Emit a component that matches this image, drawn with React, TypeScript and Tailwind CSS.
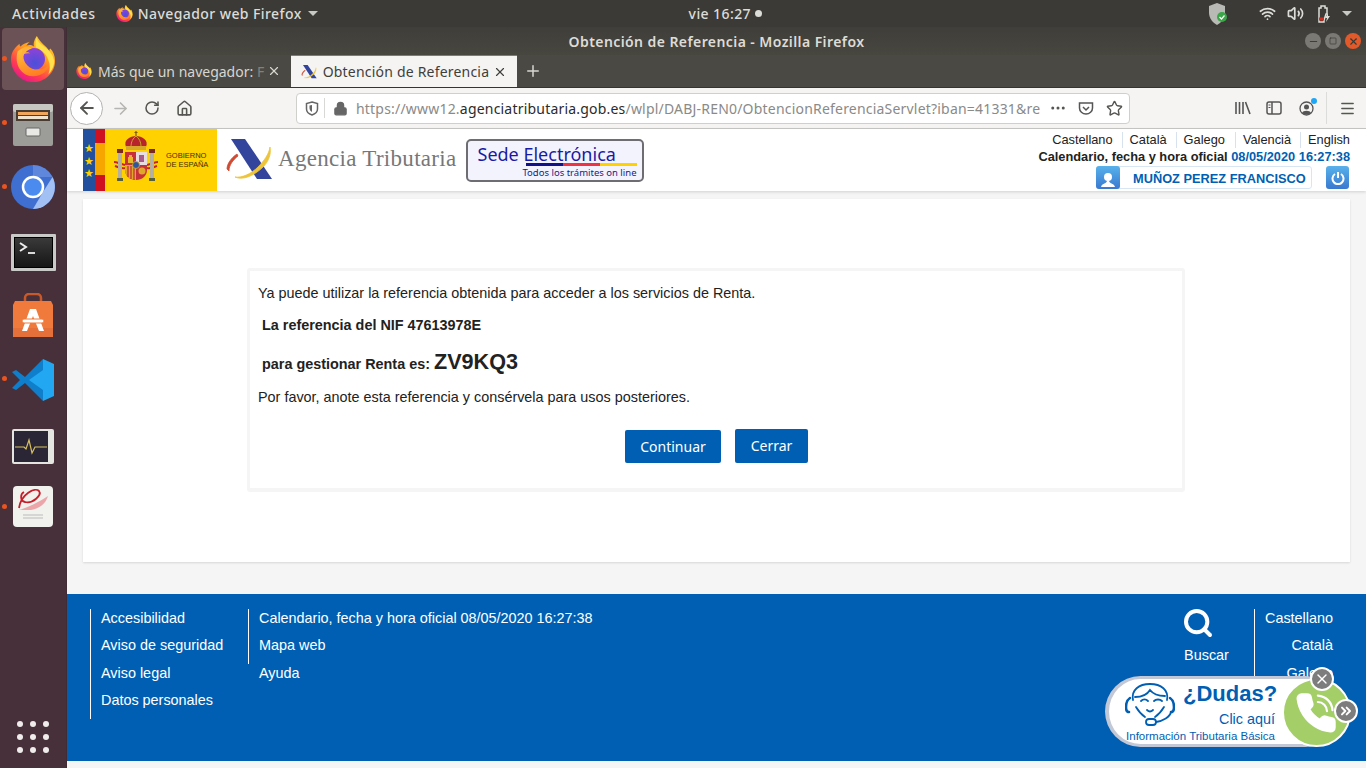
import React from 'react';
import { ArrowLeft, ArrowRight, RotateCw, Home, Lock, Star, Menu, X, Plus, Minus, Square, Wifi, Volume2, MoreHorizontal, ChevronsRight, Search } from 'lucide-react';

const ui = "font-['Noto_Sans',sans-serif]";
const web = "font-['Liberation_Sans',Arial,sans-serif]";

const Firefox = ({ size, id }: { size: number; id: string }) => (
  <svg width={size} height={size} viewBox="0 0 48 48">
    <defs>
      <linearGradient id={`${id}a`} x1="0.85" y1="0.05" x2="0.3" y2="1">
        <stop offset="0" stopColor="#ffd22e" />
        <stop offset="0.4" stopColor="#ff9a1f" />
        <stop offset="0.75" stopColor="#ff3d50" />
        <stop offset="1" stopColor="#e8168a" />
      </linearGradient>
      <linearGradient id={`${id}c`} x1="0.2" y1="0" x2="0.6" y2="1">
        <stop offset="0" stopColor="#ffc23a" />
        <stop offset="1" stopColor="#ff7a22" />
      </linearGradient>
      <radialGradient id={`${id}b`} cx="0.55" cy="0.7" r="0.8">
        <stop offset="0" stopColor="#4a50d8" />
        <stop offset="1" stopColor="#9a3fd8" />
      </radialGradient>
    </defs>
    <path d="M1 24c0 13 10 24 23 24s23-10 23-22c0-6-2-10-5-13-1 1-1 2-1 3C38 10 32 8 28 0c-2 3-4 7-3 11-3-2-5-2-8-1 1-1 2-3 4-4-5 1-8 3-10 5-1-1-1-2-1-3-5 4-9 9-9 16z" fill={`url(#${id}a)`} />
    <circle cx="25" cy="24" r="11.500" fill={`url(#${id}b)`} />
    <path d="M8 16c4-4 10-5 15-3-4 1-8 4-9 8 0 8 7 14 15 14 6 0 11-3 13-8-1 9-9 15-18 15C12 42 4 30 8 16z" fill={`url(#${id}c)`} />
    <path d="M14 12c3-1 5-1 7 0-2 1-4 3-5 5 2 0 4 0 5 1-3 0-6 0-9 2 0-3 1-6 2-8z" fill="#ffb03a" />
    <path d="M28 1c0 5 5 8 9 11 5 4 9 9 9 15 0 5-3 10-6 13 2-5 2-10 0-15-2-6-7-11-13-13-1-4 0-8 1-11z" fill="#ffe14d" />
  </svg>
);

const AgencyMark = ({ h }: { h: number }) => (
  <svg height={h} viewBox="0 0 50 42">
    <path d="M9 0h14l27 40H35z" fill="#33449c" />
    <path d="M48 8c2 10-4 19-13 25-7 5-15 8-22 5 7 1 16-3 23-10 6-6 11-13 12-20z" fill="#eec43a" stroke="#eec43a" strokeWidth="0.800" />
    <path d="M15 15C9 19 5 25 5 30l2 2c0-6 4-11 9-15z" fill="#cf4a33" stroke="#cf4a33" strokeWidth="0.800" />
  </svg>
);

const TopBar = () => (
  <div className={`h-[27px] shrink-0 bg-[#3b3a36] flex items-center text-[#dcdcd8] text-[14px] font-medium tracking-[0.42px] ${ui}`}>
    <span className="ml-3 tracking-[0.65px]">Actividades</span>
    <span className="ml-5"><Firefox size={17} id="t" /></span>
    <span className="ml-[5px]">Navegador web Firefox</span>
    <span className="ml-1.5 border-x-[5px] border-t-[5px] border-x-transparent border-t-[#c8c8c4]" />
    <div className="flex-1 flex justify-center items-center gap-1 pr-[74px]">
      <span>vie 16:27</span>
      <span className="w-[7px] h-[7px] rounded-full bg-[#dcdcd8]" />
    </div>
    <svg width="24" height="24" viewBox="0 0 24 24" className="mr-[28px]">
      <path d="M10 1l8 3v7c0 5-4 10-8 12-4-2-8-7-8-12V4z" fill="#b9b9b5" />
      <circle cx="15" cy="15" r="5" fill="#3aa648" />
      <path d="M12.500 15l2 2 3-3.500" stroke="#fff" strokeWidth="1.200" fill="none" />
    </svg>
    <Wifi size={17} strokeWidth={2.400} className="mr-[11px]" color="#dcdcd8" />
    <Volume2 size={17} strokeWidth={2.400} className="mr-[12px]" color="#dcdcd8" />
    <svg width="16" height="18" viewBox="0 0 16 18" className="mr-[10px]">
      <path d="M3 3h2V1h4v2h2v6H10L8 15v2H3z" fill="none" stroke="#dcdcd8" strokeWidth="1.500" />
      <rect x="3" y="12.500" width="5" height="3" fill="#d62a1e" />
      <path d="M12 8l-3 5h2l-1 4 4-6h-2z" fill="#dcdcd8" />
    </svg>
    <span className="mr-[14px] border-x-[5px] border-t-[5px] border-x-transparent border-t-[#c8c8c4]" />
  </div>
);

const DockItem = ({ dot, children, active }: { dot?: boolean; children: React.ReactNode; active?: boolean }) => (
  <div className="h-[64px] relative flex items-center justify-center">
    {dot && <span className="absolute left-[2px] top-[29px] w-[5px] h-[5px] rounded-full bg-[#e95420]" />}
    <div className={`w-[62px] h-[62px] rounded-[4px] flex items-center justify-center ${active ? 'bg-[#6b5257]' : ''}`}>{children}</div>
  </div>
);

const Dock = () => (
  <aside className="w-[67px] shrink-0 bg-[#47303a] flex flex-col border-r border-[#3f2c34]">
    <DockItem dot active><Firefox size={46} id="d" /></DockItem>
    <DockItem dot>
      <svg width="44" height="46" viewBox="0 0 44 46" className="mt-[3px]">
        <rect x="2" y="2" width="40" height="42" rx="2" fill="#9c9c98" />
        <rect x="2" y="2" width="40" height="8" rx="2" fill="#c6c6c2" />
        <rect x="5" y="8" width="34" height="11" fill="#4a3c33" />
        <rect x="7" y="10" width="30" height="3" fill="#f0a55a" />
        <rect x="7" y="14" width="30" height="3" fill="#efe3cf" />
        <rect x="15" y="26" width="14" height="8" rx="1" fill="#e8e8e4" stroke="#666" />
      </svg>
    </DockItem>
    <DockItem dot>
      <svg width="46" height="46" viewBox="0 0 46 46">
        <circle cx="23" cy="23" r="22" fill="#3f6fd0" />
        <path d="M23 1a22 22 0 0 1 19.500 12H23z" fill="#5f87dc" />
        <path d="M42.500 13A22 22 0 0 1 23 45l10-17z" fill="#a3c0f5" />
        <circle cx="23" cy="23" r="10" fill="#4b8bf0" stroke="#fff" strokeWidth="2.500" />
      </svg>
    </DockItem>
    <DockItem>
      <div className="w-[45px] h-[37px] mt-[3px] bg-[#c9c9c7] p-[3px] rounded-[1px]">
        <div className="w-full h-full bg-gradient-to-b from-[#3a3a3a] to-[#161616] border border-black flex items-start">
          <svg width="22" height="16" viewBox="0 0 22 16" className="mt-[3px] ml-[3px]">
            <path d="M2 2l6 4-6 4" stroke="#eee" strokeWidth="2" fill="none" />
            <path d="M10 12h7" stroke="#eee" strokeWidth="1.800" />
          </svg>
        </div>
      </div>
    </DockItem>
    <DockItem>
      <svg width="44" height="46" viewBox="0 0 44 46" className="mt-[1px]">
        <path d="M14 8V5a4 4 0 0 1 4-4h8a4 4 0 0 1 4 4v3" fill="none" stroke="#c9592a" strokeWidth="2.500" />
        <path d="M4 8h36l2 4v32H2V12z" fill="#ef7a3b" />
        <rect x="2" y="35" width="40" height="9" fill="#e5703a" />
        <path d="M19 16h6l8 22h-5l-6-15-6 15h-5z" fill="#fff" />
        <rect x="11" y="26" width="22" height="4" rx="2" fill="#fff" stroke="#ef7a3b" />
      </svg>
    </DockItem>
    <DockItem dot>
      <svg width="44" height="44" viewBox="0 0 44 44" className="mt-[1px]">
        <path d="M32 1L14 19 5 12 1 14l8 8-8 8 4 2 9-7 18 18z" fill="#0f7fcb" />
        <path d="M32 1l11 5v32l-11 5V32L18 22l14-10z" fill="#22a7f2" />
      </svg>
    </DockItem>
    <DockItem>
      <div className="w-[42px] h-[35px] mt-[6px] bg-[#e4e4e0] rounded-[2px] p-[2px] pr-[6px]">
        <div className="w-full h-full bg-[#2a2636] flex items-center">
          <svg width="34" height="29" viewBox="0 0 34 29">
            <path d="M1 15h9l2 2 3-9 3 13 3-6h12" stroke="#d8c25a" strokeWidth="1.200" fill="none" />
          </svg>
        </div>
      </div>
    </DockItem>
    <DockItem dot>
      <div className="w-[40px] h-[41px] -mt-[2px] bg-[#f1f1ee] rounded-[4px] flex items-start justify-center">
        <svg width="36" height="36" viewBox="0 0 36 36">
          <path d="M4 22C6 8 20 1 24 5c3 4-6 13-14 11C5 15 5 8 9 6" stroke="#c81e2a" strokeWidth="1.800" fill="none" />
          <path d="M4 24c8-2 20-8 29-14-2 8-10 13-17 14z" fill="#eca6aa" />
          <path d="M8 29h20M8 32h20" stroke="#bbb" />
        </svg>
      </div>
    </DockItem>
    <div className="mt-auto mb-[15px] grid grid-cols-3 gap-[7px] w-fit mx-auto">
      {Array.from({ length: 9 }).map((_, i) => <span key={i} className="w-[6px] h-[6px] rounded-full bg-[#f0ecec]" />)}
    </div>
  </aside>
);

const WinBtn = ({ children, red }: { children: React.ReactNode; red?: boolean }) => (
  <span className={`w-4 h-4 rounded-full flex items-center justify-center text-[#3a3935] ${red ? 'bg-[#e2592a]' : 'bg-[#7a7974]'}`}>{children}</span>
);

const BrowserChrome = () => (
  <div className={`shrink-0 ${ui}`}>
    <div className="h-[28px] bg-gradient-to-b from-[#3f3e3a] to-[#47463f] relative flex items-center justify-center text-[#dedcd6] text-[14px] font-semibold tracking-[0.42px]">
      <span>Obtención de Referencia - Mozilla Firefox</span>
      <div className="absolute right-[5px] top-[6px] flex gap-[4px]">
        <WinBtn><Minus size={11} /></WinBtn>
        <WinBtn><Square size={8} /></WinBtn>
        <WinBtn red><X size={11} strokeWidth={2.500} /></WinBtn>
      </div>
    </div>
    <div className="h-[33px] bg-[#4a4943] flex items-stretch text-[14px] border-b border-[#35342f]">
      <div className="w-[224px] flex items-center pl-[9px] pr-[10px] text-[#d8d6d0]">
        <Firefox size={16} id="x" />
        <span className="ml-[6px] flex-1 whitespace-nowrap">Más que un navegador: <span className="opacity-40">F</span></span>
        <X size={14} />
      </div>
      <div className="w-[226px] bg-[#f5f4f2] border-t-2 border-[#e95420] flex items-center pl-[9px] pr-[10px] text-[#3f3f3c] -mt-[1px] tracking-[0.2px]">
        <AgencyMark h={14} />
        <span className="ml-[6px] flex-1 whitespace-nowrap">Obtención de Referencia</span>
        <X size={14} />
      </div>
      <div className="w-[32px] flex items-center justify-center text-[#d8d6d0]"><Plus size={18} /></div>
    </div>
    <div className="h-[41px] bg-[#f5f4f2] border-b border-[#c8c8c6] flex items-center text-[#555552]">
      <span className="ml-[3px] w-[33px] h-[33px] rounded-full border border-[#b3b3b0] bg-white flex items-center justify-center"><ArrowLeft size={20} strokeWidth={2.300} /></span>
      <ArrowRight size={19} className="ml-[8px] text-[#b5b5b2]" />
      <RotateCw size={16} strokeWidth={2.300} className="ml-[14px]" />
      <Home size={17} strokeWidth={2.200} className="ml-[16px]" />
      <div className="ml-[103px] w-[834px] h-[31px] bg-white border border-[#cfcfcc] rounded-[4px] flex items-center text-[14px] tracking-[0.2px]">
        <svg width="14" height="15" viewBox="0 0 14 15" className="ml-[8px]"><path d="M7 1l5.500 1.500V8C12.500 11 10 13 7 14 4 13 1.500 11 1.500 8V2.500z" fill="none" stroke="#666" strokeWidth="1.500" /><path d="M7 4v7c-1.500-.8-2.500-2-2.500-4V4.500z" fill="#666" /></svg>
        <span className="w-px h-[20px] bg-[#d8d8d5] ml-[5px]" />
        <Lock size={15} className="ml-[8px] text-[#666]" fill="#666" />
        <span className="ml-[8px] flex-1 whitespace-nowrap text-[#8a8a88]">https://www12.<span className="text-[#2b2b2b]">agenciatributaria.gob.es</span>/wlpl/DABJ-REN0/ObtencionReferenciaServlet?iban=41331&amp;re</span>
        <MoreHorizontal size={18} />
        <svg width="16" height="15" viewBox="0 0 16 15" className="ml-[11px]"><path d="M1.500 2h13v5c0 3.500-3 6-6.500 6S1.500 10.500 1.500 7z" fill="none" stroke="#555" strokeWidth="1.500" /><path d="M5 6l3 3 3-3" fill="none" stroke="#555" strokeWidth="1.500" /></svg>
        <Star size={17} className="ml-[12px] mr-[6px]" />
      </div>
      <svg width="16" height="14" viewBox="0 0 16 14" className="ml-[105px]"><path d="M1 1v12M4.500 1v12M8 1v12M10.500 1l4.500 12" stroke="#555" strokeWidth="1.600" fill="none" /></svg>
      <svg width="16" height="14" viewBox="0 0 16 14" className="ml-[15px]"><rect x="1" y="1" width="14" height="12" rx="2" fill="none" stroke="#555" strokeWidth="1.500" /><path d="M6 1v12" stroke="#555" strokeWidth="1.500" /><path d="M2.500 4h2M2.500 6.500h2" stroke="#555" /></svg>
      <span className="ml-[17px] relative">
        <svg width="15" height="15" viewBox="0 0 15 15" className="block"><circle cx="7.500" cy="7.500" r="6.500" fill="none" stroke="#555" strokeWidth="1.300" /><circle cx="7.500" cy="6" r="2.500" fill="#555" /><path d="M3 12c1-3 8-3 9 0-2 2-7 2-9 0z" fill="#555" /></svg>
        <span className="absolute -right-[3px] -top-[3px] w-[6px] h-[6px] rounded-full bg-[#1fa5f5]" />
      </span>
      <span className="ml-[12px] w-px h-[32px] bg-[#dcdcda]" />
      <Menu size={17} strokeWidth={2} className="ml-[12px]" />
    </div>
  </div>
);

const Crest = () => (
  <svg width="46" height="62" viewBox="0 0 46 62" className="ml-[8px]">
    <path d="M1 33c3 0 6 2 11 3M45 33c-3 0-6 2-11 3M2 37c3 1 6 3 10 2M44 37c-3 1-6 3-10 2" stroke="#c8242c" strokeWidth="2" fill="none" />
    <rect x="5" y="23" width="4" height="27" fill="#b5b0a0" />
    <rect x="37" y="23" width="4" height="27" fill="#b5b0a0" />
    <rect x="4" y="20" width="6" height="4" fill="#7a2a20" />
    <rect x="36" y="20" width="6" height="4" fill="#7a2a20" />
    <rect x="4" y="49" width="6" height="3" fill="#55603a" />
    <rect x="36" y="49" width="6" height="3" fill="#55603a" />
    <path d="M12 23h22v18c0 6-5 10-11 10s-11-4-11-10z" fill="#c8303a" />
    <rect x="23" y="23" width="11" height="13" fill="#e8dce0" />
    <path d="M26 26h5v7h-5z" fill="#a85a8a" />
    <path d="M16 26h3v2h1v6h-5v-6h1z" fill="#e8b82a" />
    <path d="M12 36h11v15c-6 0-11-4-11-10z" fill="#e0a82a" />
    <path d="M15 37v11M18 37v13M21 37v14" stroke="#c8303a" strokeWidth="1.300" />
    <circle cx="29" cy="42" r="3.500" fill="#e0a82a" />
    <circle cx="23" cy="36" r="3.500" fill="#2f57a0" stroke="#d8b02a" strokeWidth="0.800" />
    <path d="M13 18c-3-7 4-11 10-11s13 4 10 11z" fill="#b8242c" />
    <path d="M18 17c0-4 2-8 5-10 3 2 5 6 5 10" fill="none" stroke="#c8a02a" />
    <rect x="13" y="17" width="20" height="4" fill="#d8a82a" />
    <path d="M23 2v5M21.500 3.500h3" stroke="#7a5a10" strokeWidth="1.200" />
  </svg>
);

const SiteHeader = () => (
  <header className={`h-[62px] shrink-0 bg-white flex shadow-[0_1px_3px_rgba(0,0,0,0.15)] pl-[16px] relative ${web}`}>
    <div className="w-[134px] bg-[#ffd100] flex">
      <div className="w-[12px] bg-[#23509e] flex flex-col items-center pt-[13px] text-[#ffd100] text-[11px] leading-[12.500px]">
        <span>★</span><span>★</span><span>★</span>
      </div>
      <div className="w-[10px] flex flex-col">
        <span className="h-[14px] bg-[#ce1020]" />
        <span className="h-[32px] bg-[#f7a600]" />
        <span className="flex-1 bg-[#ce1020]" />
      </div>
      <Crest />
      <div className="ml-[7px] mt-[22px] text-[7.500px] leading-[9px] text-[#3a3000]">GOBIERNO<br />DE ESPAÑA</div>
    </div>
    <div className="ml-[5px] mt-[10px]"><AgencyMark h={42} /></div>
    <div className="ml-[6px] mt-[17px] font-['Liberation_Serif',serif] text-[#777] text-[23px] leading-[26px] tracking-[0.3px] whitespace-nowrap">Agencia Tributaria</div>
    <div className={`ml-[9px] mt-[10px] w-[178px] h-[43px] border-2 border-[#6e6e72] rounded-[5px] bg-[#f3f3fd] pl-[10px] pr-[5px] shrink-0 ${ui}`}>
      <div className="text-[#1a1aa5] text-[18px] leading-[18px] pt-[4px] h-[22px] box-border whitespace-nowrap">Sede <span>Electrónica</span></div>
      <div className="flex h-[3px] ml-[48px]"><span className="flex-1 bg-[#111188]" /><span className="flex-1 bg-[#ee3344]" /><span className="flex-1 bg-[#ffd100]" /></div>
      <div className="text-[#1a1a85] text-[9.500px] leading-[11px] text-right mt-[1px] whitespace-nowrap">Todos los trámites on line</div>
    </div>
    <div className="ml-auto mr-[16px] flex flex-col items-end pt-[3px] text-[12.800px] text-[#222]">
      <div className="flex leading-[16px] h-[16px]">
        <span className="pr-[9px]">Castellano</span>
        <span className="border-l border-[#d8e2ee] pl-[7px] pr-[9px]">Català</span>
        <span className="border-l border-[#d8e2ee] pl-[7px] pr-[10px]">Galego</span>
        <span className="border-l border-[#d8e2ee] pl-[7px] pr-[9px]">Valencià</span>
        <span className="border-l border-[#d8e2ee] pl-[7px]">English</span>
      </div>
      <div className="font-bold leading-[18px] h-[18px] whitespace-nowrap">Calendario, fecha y hora oficial <span className="text-[#005fb3]">08/05/2020 16:27:38</span></div>
      <div className="flex items-center">
        <div className="w-[216px] h-[23px] border border-[#d8e6f4] rounded-[3px] flex items-center">
          <span className="w-[24px] h-[23px] -ml-px rounded-[3px] bg-gradient-to-b from-[#58b2ea] to-[#3a78d0] flex items-end justify-center">
            <svg width="16" height="18" viewBox="0 0 16 18"><circle cx="8" cy="6" r="4" fill="#fff" /><path d="M1 16c1-4 5-3 6-6h2c1 3 5 2 6 6z" fill="#fff" /></svg>
          </span>
          <span className="ml-[13px] mt-[2px] font-bold text-[#005fb3] whitespace-nowrap">MUÑOZ PEREZ FRANCISCO</span>
        </div>
        <span className="ml-[14px] mr-px w-[23px] h-[23px] rounded-[3px] bg-gradient-to-b from-[#58b2ea] to-[#3a78d0] flex items-center justify-center">
          <svg width="14" height="14" viewBox="0 0 14 14"><path d="M4 3a5.500 5.500 0 1 0 6 0" fill="none" stroke="#fff" strokeWidth="2" /><path d="M7 1v6" stroke="#fff" strokeWidth="2" /></svg>
        </span>
      </div>
    </div>
  </header>
);

const Btn = ({ children, className }: { children: React.ReactNode; className: string }) => (
  <button className={`bg-[#005fb3] text-white text-[14px] rounded-[2px] ${ui} ${className}`}>{children}</button>
);

const Card = () => (
  <div className="flex-1 bg-[#f5f5f5] pt-[8px] px-[16px] pb-[32px] min-h-0">
    <div className="h-[363px] bg-white shadow-[0_1px_2px_rgba(0,0,0,0.12)] pt-[69px] pl-[164px]">
      <div className={`w-[938px] h-[224px] border-[3px] border-b-[4px] border-[#f5f5f5] rounded-[3px] pl-[8px] text-[14.400px] text-[#222] ${web}`}>
        <p className="pt-[14px] leading-[16px]">Ya puede utilizar la referencia obtenida para acceder a los servicios de Renta.</p>
        <p className="mt-[16px] ml-[4px] font-bold leading-[16px]">La referencia del NIF 47613978E</p>
        <p className="mt-[15px] ml-[4px] font-bold leading-[28px] h-[28px]">para gestionar Renta es: <span className="text-[21.600px]">ZV9KQ3</span></p>
        <p className="mt-[13px] leading-[16px]">Por favor, anote esta referencia y consérvela para usos posteriores.</p>
        <div className="flex gap-[14px] pl-[367px] mt-[24px] items-start">
          <Btn className="w-[96px] h-[33px] mt-px">Continuar</Btn>
          <Btn className="w-[73px] h-[34px] pb-[2px]">Cerrar</Btn>
        </div>
      </div>
    </div>
  </div>
);

const Widget = () => (
  <div className={`absolute left-[1038px] top-[82px] w-[250px] h-[73px] ${web}`}>
    <div className="absolute left-0 top-0 w-[236px] h-[71px] rounded-full bg-white border-[3px] border-l-[4px] border-[#c3c8d6]" />
    <svg width="50" height="50" viewBox="0 0 50 50" className="absolute left-[20px] top-[6px]" fill="none" stroke="#005fb3" strokeWidth="1.800" strokeLinecap="round">
      <path d="M8 18C6 8 14 2 25 2s19 6 17 16" />
      <path d="M10 15c6 0 12-2 15-7 3 4 9 6 15 6" />
      <path d="M11 25c3 5 6 8 9 10M39 25c-3 5-6 8-9 10" />
      <path d="M16 19c2-2 5-2 7 0M29 19c2-2 6-2 8 0M22 28c2 2 4 2 6 0" />
      <path d="M5 16c-3 2-4 5-4 9 0 3 1 5 3 5M45 16c3 2 4 5 4 9 0 3-1 5-3 5" strokeWidth="2.600" />
      <path d="M46 30c-1 5-8 9-15 10" />
      <rect x="21" y="37" width="10" height="6" rx="3" />
    </svg>
    <span className="absolute left-[78px] top-[4px] text-[22px] leading-[28px] font-bold text-[#005fb3] whitespace-nowrap">¿Dudas?</span>
    <span className="absolute right-[80px] top-[35px] text-[14.400px] leading-[16px] text-[#005fb3] whitespace-nowrap">Clic aquí</span>
    <span className="absolute right-[80px] top-[53px] text-[11.500px] leading-[14px] text-[#005fb3] whitespace-nowrap">Información Tributaria Básica</span>
    <span className="absolute left-[177px] top-[2px] w-[69px] h-[69px] rounded-full bg-[#a3ce68] border-2 border-white flex items-center justify-center">
      <svg width="44" height="44" viewBox="0 0 24 24" className="-ml-[2px]" fill="none" stroke="#fff" strokeLinecap="round">
        <path d="M22 16.920v3a2 2 0 0 1-2.180 2 19.790 19.790 0 0 1-8.630-3.070 19.500 19.500 0 0 1-6-6 19.790 19.790 0 0 1-3.070-8.670A2 2 0 0 1 4.110 2h3a2 2 0 0 1 2 1.720 12.840 12.840 0 0 0 .7 2.810 2 2 0 0 1-.45 2.110L8.090 9.910a16 16 0 0 0 6 6l1.270-1.270a2 2 0 0 1 2.110-.45 12.840 12.840 0 0 0 2.810.7A2 2 0 0 1 22 16.920z" fill="#fff" strokeWidth="1.500" />
        <path d="M13 2.500a8.500 8.500 0 0 1 8 8" strokeWidth="1.200" />
        <path d="M13 6a5 5 0 0 1 5 5" strokeWidth="1.200" />
      </svg>
    </span>
    <span className="absolute left-[205px] -top-[9px] w-[24px] h-[24px] rounded-full bg-[#7d7d7d] border-2 border-white flex items-center justify-center text-white"><X size={16} /></span>
    <span className="absolute left-[229px] top-[23px] w-[24px] h-[24px] rounded-full bg-[#7d7d7d] border-2 border-white flex items-center justify-center text-white"><ChevronsRight size={16} strokeWidth={3} /></span>
  </div>
);

const Footer = () => (
  <footer className={`h-[167px] shrink-0 bg-[#005fb3] text-white text-[14.400px] relative flex pl-[23px] pt-[15px] ${web}`}>
    <div className="w-[158px] h-[110px] border-l border-white pl-[10px] flex flex-col">
      {['Accesibilidad', 'Aviso de seguridad', 'Aviso legal', 'Datos personales'].map(t => <a key={t} className="h-[27.300px] shrink-0 leading-[19px]">{t}</a>)}
    </div>
    <div className="h-[55px] border-l border-white pl-[10px] flex flex-col">
      {['Calendario, fecha y hora oficial 08/05/2020 16:27:38', 'Mapa web', 'Ayuda'].map(t => <a key={t} className="h-[27.300px] shrink-0 leading-[19px] whitespace-nowrap">{t}</a>)}
    </div>
    <div className="ml-auto mr-[25px] w-[45px] flex flex-col items-center">
      <Search size={32} strokeWidth={3} className="-mt-[2px] -ml-[18px]" />
      <span className="mt-[7px] leading-[19px]">Buscar</span>
    </div>
    <div className="w-[112px] h-[100px] border-l border-white pl-[10px] pr-[33px] flex flex-col items-end">
      {['Castellano', 'Català', 'Galego'].map(t => <a key={t} className="h-[27.300px] shrink-0 leading-[19px]">{t}</a>)}
    </div>
    <Widget />
  </footer>
);

export default function App() {
  return (
    <div className="w-[1366px] h-[768px] overflow-hidden flex flex-col bg-[#f5f5f5]">
      <TopBar />
      <div className="flex-1 flex min-h-0">
        <Dock />
        <main className="flex-1 flex flex-col min-w-0 pb-[7px]">
          <BrowserChrome />
          <SiteHeader />
          <Card />
          <Footer />
        </main>
      </div>
    </div>
  );
}
